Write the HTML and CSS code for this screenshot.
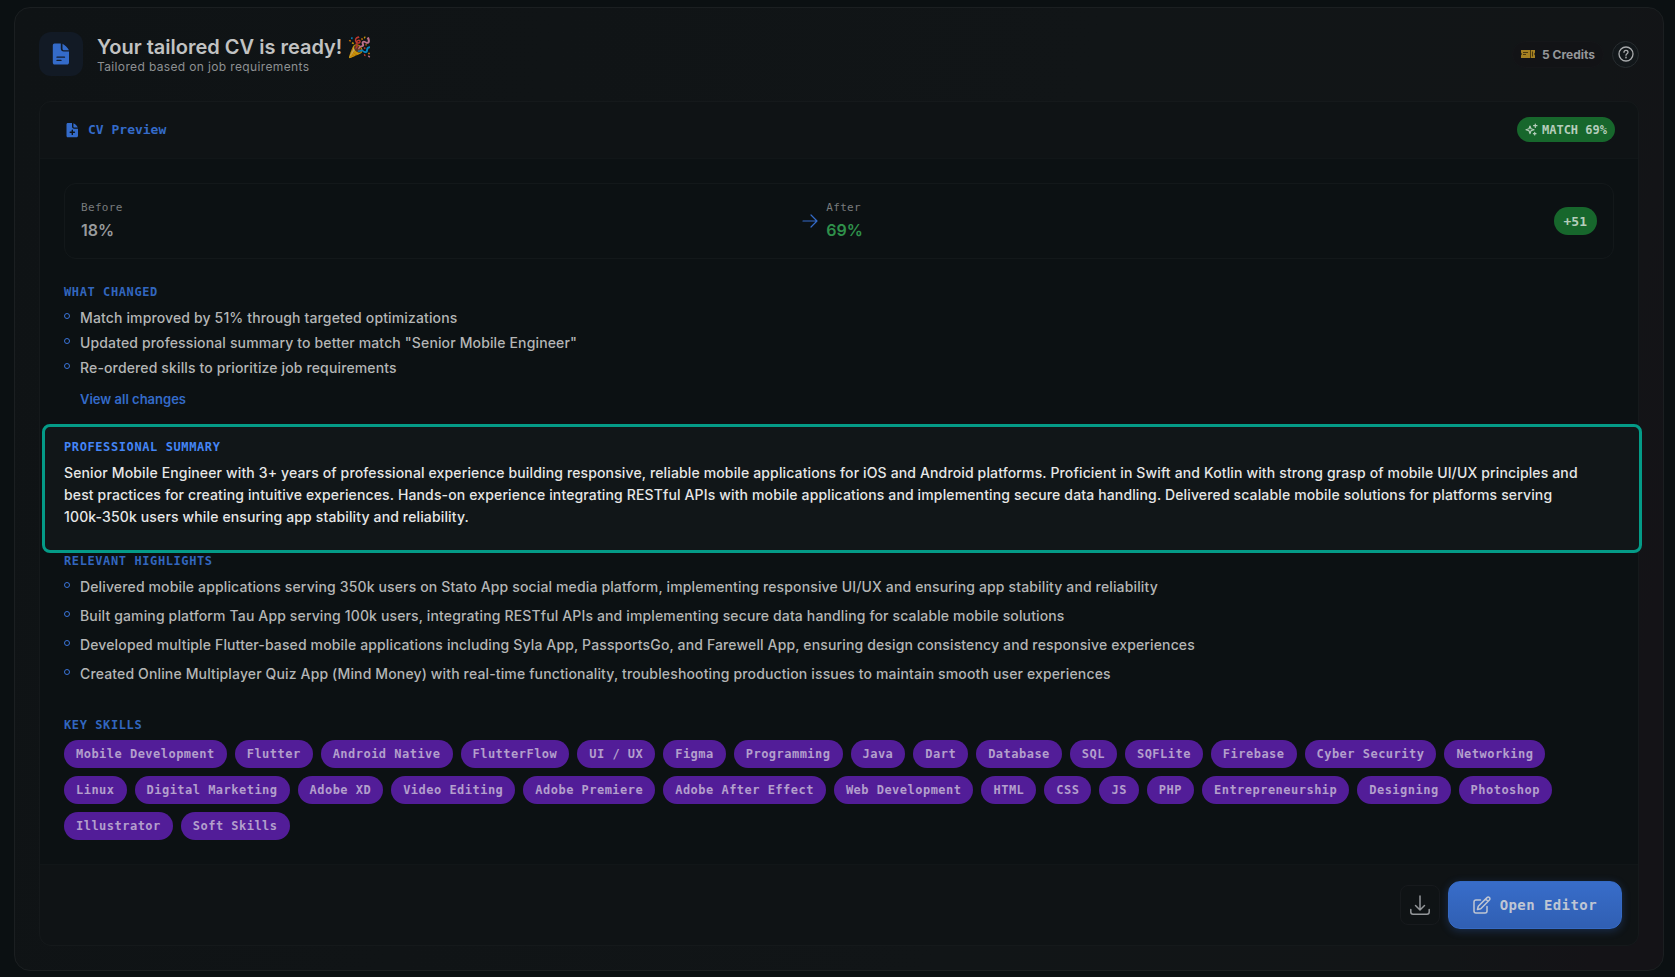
FILE: index.html
```html
<!DOCTYPE html>
<html lang="en">
<head>
<meta charset="utf-8">
<title>Your tailored CV is ready</title>
<link rel="stylesheet" href="styles.css">
</head>
<body>
<main class="panel">
  <header class="panel-head">
    <div class="head-icon">
      <svg width="24" height="24" viewBox="0 0 24 24" aria-hidden="true"><path fill="#346bc9" d="M5.600 1.500H11.800V6.600C11.800 8.400 13 9.600 14.800 9.600H20V20.400C20 21.600 19.200 22.500 18 22.500H5.600C4.500 22.500 3.800 21.600 3.800 20.400V3.500C3.800 2.300 4.500 1.500 5.600 1.500ZM13.500 1.700C16 3 18.500 5.300 20 8.300H15C14 8.300 13.500 7.600 13.500 6.800Z"/><path stroke="#131c2b" stroke-width="1.300" stroke-linecap="round" d="M8 15.200H15.500M8 18.400H12"/></svg>
    </div>
    <div class="head-text">
      <h1>Your tailored CV is ready! <span class="emoji">🎉</span></h1>
      <p>Tailored based on job requirements</p>
    </div>
    <div class="head-side">
      <span class="credits">
        <svg width="14" height="8" viewBox="0 0 14 8" aria-hidden="true"><path fill="#a58122" d="M0 0H14V2.500L13.200 4L14 5.500V8H0V5.500L.8 4L0 2.500Z"/><path stroke="#4b3a10" stroke-width="1" fill="none" d="M2 2.500H7M2 4.500H5M9.500 0V8M11.500 1.500V6.500"/></svg>
        5 Credits</span>
      <button class="help" type="button" aria-label="Help">
        <svg width="16" height="16" viewBox="0 0 16 16" fill="none" stroke="currentColor" stroke-width="1.300" stroke-linecap="round" aria-hidden="true"><circle cx="8" cy="8" r="7"/><path d="M6 6.300C6 5.100 6.900 4.400 8 4.400S10 5.100 10 6.200C10 7.700 8 7.800 8 9.300"/><circle cx="8" cy="11.500" r=".3"/></svg>
      </button>
    </div>
  </header>

  <section class="card">
    <header class="card-head">
      <h2 class="card-title">
        <svg width="14" height="16" viewBox="0 0 14 16" aria-hidden="true"><path fill="#346bc9" d="M2.800 1H7V4.600C7 5.900 7.900 6.700 9.100 6.700H13V13.800C13 14.700 12.400 15.300 11.500 15.300H2.800C1.900 15.300 1.500 14.700 1.500 13.800V2.500C1.500 1.600 1.900 1 2.800 1ZM8.400 1.200C10.300 2 12 3.700 12.800 5.500H9.400C8.700 5.500 8.400 5.100 8.400 4.500Z"/><path stroke="#0f1416" stroke-width="1.400" stroke-linecap="round" d="M7.300 8.200V12.400M5.200 10.300H9.400"/></svg>
        CV Preview</h2>
      <span class="match">
        <svg width="13" height="13" viewBox="0 0 13 13" fill="none" stroke="currentColor" stroke-width="1.200" stroke-linejoin="round" stroke-linecap="round" aria-hidden="true"><path d="M5 3L6 5.800L9 6.800L6 7.800L5 10.600L4 7.800L1 6.800L4 5.800ZM10.300 1V4.400M8.600 2.700H12M9.700 9.400V12M8.400 10.700H11"/></svg>
        MATCH 69%</span>
    </header>

    <div class="card-body">
      <div class="compare">
        <div class="score"><span class="score-label">Before</span><strong>18%</strong></div>
        <svg width="16" height="14" viewBox="0 0 16 14" fill="none" stroke="#346bc9" stroke-width="1.200" stroke-linecap="round" stroke-linejoin="round" aria-hidden="true"><path d="M1 7H15M9 1L15 7L9 13"/></svg>
        <div class="score good"><span class="score-label">After</span><strong>69%</strong></div>
        <span class="delta">+51</span>
      </div>

      <section class="block">
        <h3>WHAT CHANGED</h3>
        <ul class="list">
          <li>Match improved by 51% through targeted optimizations</li>
          <li>Updated professional summary to better match "Senior Mobile Engineer"</li>
          <li>Re-ordered skills to prioritize job requirements</li>
        </ul>
        <a class="more" href="#changes">View all changes</a>
      </section>

      <section class="block spotlight">
        <h3>PROFESSIONAL SUMMARY</h3>
        <p>Senior Mobile Engineer with 3+ years of professional experience building responsive, reliable mobile applications for iOS and Android platforms. Proficient in Swift and Kotlin with strong grasp of mobile UI/UX principles and best practices for creating intuitive experiences. Hands-on experience integrating RESTful APIs with mobile applications and implementing secure data handling. Delivered scalable mobile solutions for platforms serving 100k-350k users while ensuring app stability and reliability.</p>
      </section>

      <section class="block">
        <h3>RELEVANT HIGHLIGHTS</h3>
        <ul class="list roomy">
          <li>Delivered mobile applications serving 350k users on Stato App social media platform, implementing responsive UI/UX and ensuring app stability and reliability</li>
          <li>Built gaming platform Tau App serving 100k users, integrating RESTful APIs and implementing secure data handling for scalable mobile solutions</li>
          <li>Developed multiple Flutter-based mobile applications including Syla App, PassportsGo, and Farewell App, ensuring design consistency and responsive experiences</li>
          <li>Created Online Multiplayer Quiz App (Mind Money) with real-time functionality, troubleshooting production issues to maintain smooth user experiences</li>
        </ul>
      </section>

      <section class="block">
        <h3>KEY SKILLS</h3>
        <ul class="skills">
          <li>Mobile Development</li><li>Flutter</li><li>Android Native</li><li>FlutterFlow</li><li>UI / UX</li><li>Figma</li><li>Programming</li><li>Java</li><li>Dart</li><li>Database</li><li>SQL</li><li>SQFLite</li><li>Firebase</li><li>Cyber Security</li><li>Networking</li><li>Linux</li><li>Digital Marketing</li><li>Adobe XD</li><li>Video Editing</li><li>Adobe Premiere</li><li>Adobe After Effect</li><li>Web Development</li><li>HTML</li><li>CSS</li><li>JS</li><li>PHP</li><li>Entrepreneurship</li><li>Designing</li><li>Photoshop</li><li>Illustrator</li><li>Soft Skills</li>
        </ul>
      </section>
    </div>

    <footer class="card-foot">
      <button class="download" type="button" aria-label="Download">
        <svg width="20" height="20" viewBox="0 0 20 20" fill="none" stroke="currentColor" stroke-width="1.500" stroke-linecap="round" stroke-linejoin="round" aria-hidden="true"><path d="M10 1V14.500M5.500 10.500L10 15L14.500 10.500M.8 14.500V17C.8 18.300 1.600 19.200 3 19.200H17C18.400 19.200 19.200 18.300 19.200 17V14.500"/></svg>
      </button>
      <button class="open" type="button">
        <svg width="18" height="18" viewBox="0 0 18 18" fill="none" stroke="currentColor" stroke-width="1.500" stroke-linecap="round" stroke-linejoin="round" aria-hidden="true"><path d="M7.500 4H3C1.800 4 1 4.800 1 6V15C1 16.200 1.800 17 3 17H12C13.200 17 14 16.200 14 15V10.500M4.500 13.500L5.300 10.200L14 1.600C14.700.9 15.700.9 16.400 1.600C17.100 2.300 17.100 3.300 16.400 4L7.800 12.700ZM12.700 3L15 5.300"/></svg>
        Open Editor</button>
    </footer>
  </section>
</main>
</body>
</html>
```
FILE: styles.css
```css
*, *::before { box-sizing: border-box; }

body {
  margin: 0;
  min-height: 100vh;
  padding: 7px 11px 6px 14px;
  background: #0b1012;
  color: #b4b6b6;
  font-family: Inter, sans-serif;
  font-size: 14px;
}

h1, h2, h3, p, ul { margin: 0; padding: 0; }
ul { list-style: none; }
button { font: inherit; color: inherit; padding: 0; cursor: pointer; }
svg { display: block; flex: none; }

.panel {
  padding: 24px;
  border: 1px solid #1b1f21;
  border-radius: 16px;
  background: linear-gradient(100deg, #0f1315 0%, #111517 60%, #121517 88%, #141317 96%);
}

.panel-head {
  display: flex;
  align-items: center;
  gap: 14px;
  margin-bottom: 25px;
}

.head-icon {
  display: grid;
  place-items: center;
  width: 44px;
  height: 44px;
  border-radius: 12px;
  background: #121a25;
}

.head-text { flex: 1; padding-top: 4px; }
h1 { font-size: 20px; line-height: 22px; font-weight: 600; color: #c1c2c2; }
.emoji { font-family: "Noto Color Emoji", sans-serif; font-weight: 400; opacity: .75; }
.head-text p { font-size: 12px; line-height: 18px; letter-spacing: .03em; color: #8d9092; }

.head-side { display: flex; align-items: center; gap: 8px; }

.credits {
  display: flex;
  align-items: center;
  gap: 7px;
  height: 27px;
  padding: 0 8px;
  border: 1px solid #151619;
  border-radius: 14px;
  background: #121316;
  font-size: 12px;
  font-weight: 700;
  color: #95979a;
}

.help {
  display: grid;
  place-items: center;
  width: 27px;
  height: 27px;
  border: 1px solid #272c2f;
  border-radius: 50%;
  background: #12171a;
  color: #a9abad;
}

.card {
  border: 1px solid #15191b;
  border-radius: 12px;
  background: #0f1315;
}

.card-head {
  display: flex;
  align-items: center;
  justify-content: space-between;
  padding: 15px 23px 16px 25px;
  border-bottom: 1px solid #111618;
}

.card-title {
  display: flex;
  align-items: center;
  gap: 9px;
  font: 700 13px/16px "DejaVu Sans Mono", monospace;
  color: #346bc9;
}

.match, .delta {
  display: flex;
  align-items: center;
  border-radius: 14px;
  background: #17672c;
  color: #b5cdbb;
  font-family: "DejaVu Sans Mono", monospace;
  font-weight: 700;
}
.match { gap: 4px; height: 25px; padding: 0 8px; font-size: 12px; }
.delta { height: 28px; margin-left: 6px; padding: 0 10px; font-size: 13px; }

.card-body {
  display: flex;
  flex-direction: column;
  gap: 24px;
  padding: 24px;
  background: #0c1113;
}

.compare {
  display: flex;
  align-items: center;
  gap: 8px;
  height: 76px;
  padding: 0 16px;
  border: 1px solid #13181a;
  border-radius: 12px;
}

.score { display: flex; flex: 1; flex-direction: column; gap: 4px; padding-bottom: 2px; }
.score-label { font: 400 11px/16px "DejaVu Sans Mono", monospace; letter-spacing: .03em; color: #787b7d; }
.score strong { font-size: 16px; line-height: 20px; font-weight: 600; color: #989b9d; }
.good strong { color: #2f914b; }

h3 {
  margin-bottom: 6px;
  font: 700 12px/18px "DejaVu Sans Mono", monospace;
  letter-spacing: .05em;
  color: #3266be;
}

.list { display: flex; flex-direction: column; gap: 3px; }
.list li {
  position: relative;
  padding-left: 16px;
  font-weight: 500;
  line-height: 22px;
  letter-spacing: .01em;
}
.list li::before {
  content: "";
  position: absolute;
  left: 0;
  top: 6px;
  width: 6px;
  height: 6px;
  border: 1px solid #3a74d8;
  border-radius: 50%;
}
.roomy { gap: 7px; padding-bottom: 7px; }

.more {
  display: block;
  width: fit-content;
  margin: 10px 0 0 16px;
  font-size: 13px;
  line-height: 20px;
  font-weight: 600;
  color: #346bc9;
  text-decoration: none;
}

.spotlight { position: relative; z-index: 1; padding: 5px 0 0; }
.spotlight::before {
  content: "";
  position: absolute;
  z-index: -1;
  inset: -9px -28px -25px -22px;
  border: 3px solid #049b87;
  border-radius: 8px;
  background: #111618;
}
.spotlight h3 { color: #4485f5; }
.spotlight p { padding-right: 24px; font-weight: 500; line-height: 22px; letter-spacing: .01em; color: #e6e7e7; }

.skills { display: flex; flex-wrap: wrap; gap: 8px; }
.skills li {
  padding: 0 12px;
  border-radius: 14px;
  background: #521d98;
  color: #b39fcc;
  font: 700 12px/28px "DejaVu Sans Mono", monospace;
  letter-spacing: .04em;
}

.card-foot {
  display: flex;
  align-items: center;
  justify-content: flex-end;
  gap: 8px;
  padding: 16px;
  border-top: 1px solid #111618;
}

.download {
  display: grid;
  place-items: center;
  width: 40px;
  height: 40px;
  border: 1px solid #171a1d;
  border-radius: 8px;
  background: #0f1315;
  color: #94979a;
}

.open {
  display: flex;
  align-items: center;
  gap: 9px;
  height: 48px;
  padding: 0 24px;
  border: 1px solid #356ac4;
  border-radius: 12px;
  background: linear-gradient(#386dca, #305fb3);
  box-shadow: 0 2px 8px rgba(52, 107, 201, .3);
  color: #bfc6d4;
  font: 700 14px/20px "DejaVu Sans Mono", monospace;
  letter-spacing: .03em;
}
```
